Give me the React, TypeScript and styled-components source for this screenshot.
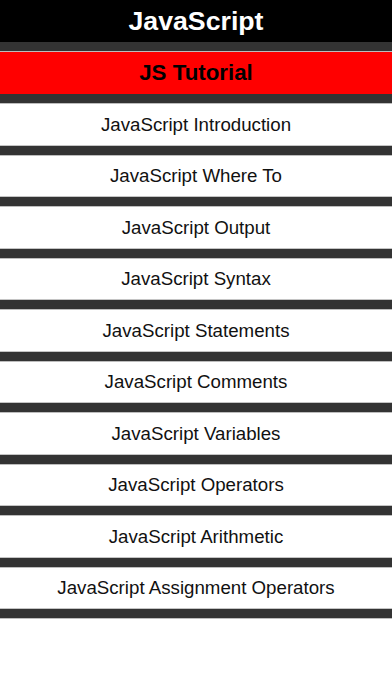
import styled, { createGlobalStyle } from 'styled-components'

const GlobalStyle = createGlobalStyle`
  html, body {
    margin: 0;
    padding: 0;
    background: #fff;
  }
  body {
    font-family: 'Liberation Sans', Arial, sans-serif;
  }
`

const Page = styled.div`
  display: flex;
  flex-flow: column nowrap;
  width: 392px;
`

const TitleBar = styled.header`
  display: flex;
  align-items: center;
  justify-content: center;
  height: 42px;
  background: #000;
  color: #fff;
  font-weight: bold;
  font-size: 26.7px;
`

const Band = styled.div`
  height: 9px;
  background: #333;
  border-bottom: 1px solid #bdbdbd;
`

const SectionBar = styled.div`
  display: flex;
  align-items: center;
  justify-content: center;
  height: 42px;
  background: #ff0000;
  color: #000;
  font-weight: bold;
  font-size: 22.3px;
`

const List = styled.ul`
  list-style: none;
  margin: 0;
  padding: 0;
`

const Item = styled.li`
  display: flex;
  flex-flow: column nowrap;
`

const Label = styled.div`
  display: flex;
  align-items: center;
  justify-content: center;
  height: 40.5px;
  padding-top: 1px;
  background: #fff;
  border-bottom: 1px solid #c4c4c4;
  color: #111;
  font-size: 18.7px;
  box-sizing: border-box;
  height: 41.5px;
`

const topics = [
  'JavaScript Introduction',
  'JavaScript Where To',
  'JavaScript Output',
  'JavaScript Syntax',
  'JavaScript Statements',
  'JavaScript Comments',
  'JavaScript Variables',
  'JavaScript Operators',
  'JavaScript Arithmetic',
  'JavaScript Assignment Operators',
]

const App = () => {
  return (
    <Page>
      <GlobalStyle />
      <TitleBar>JavaScript</TitleBar>
      <Band />
      <SectionBar>JS Tutorial</SectionBar>
      <List>
        {topics.map((topic) => (
          <Item key={topic}>
            <Band />
            <Label>{topic}</Label>
          </Item>
        ))}
      </List>
      <Band />
    </Page>
  )
}

export default App
